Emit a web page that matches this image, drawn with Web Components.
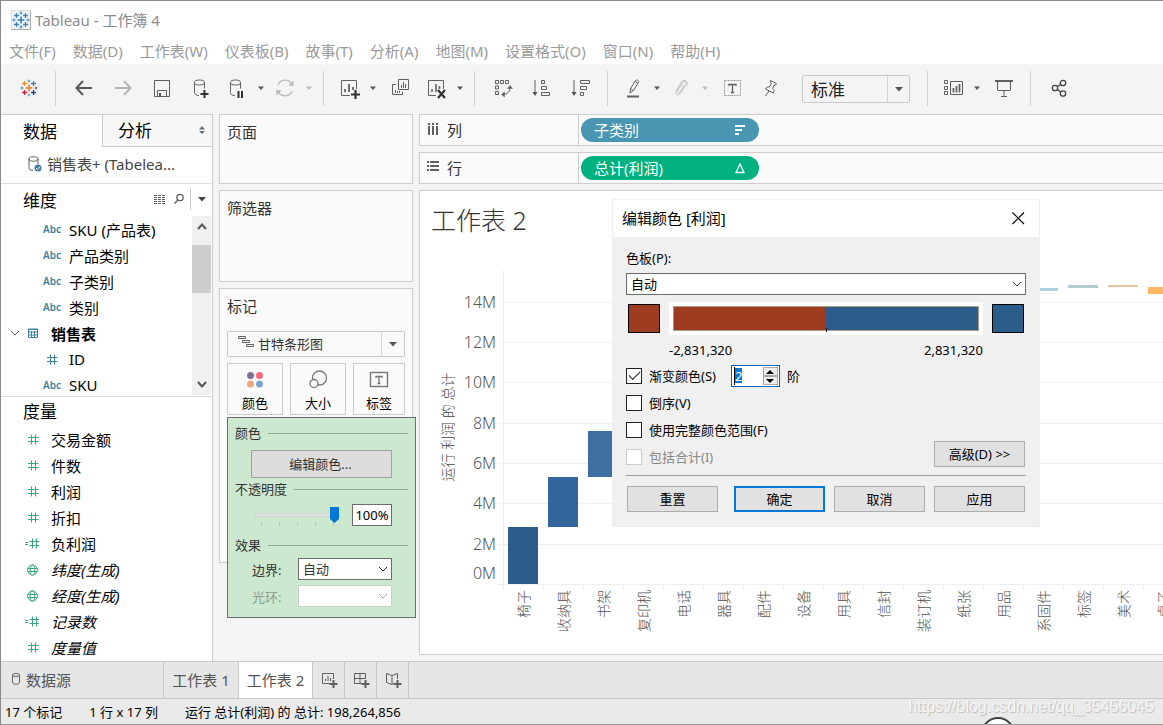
<!DOCTYPE html>
<html lang="zh-CN">
<head>
<meta charset="utf-8">
<title>Tableau - 工作簿 4</title>
<style>
html, body { margin: 0; height: 100%; }
body { font-family: "Noto Sans", "Noto Sans CJK SC", sans-serif; font-size: 15px; color: #000; background: #f4f4f4; overflow: hidden; }
</style>
</head>
<body>
<wb-app></wb-app>
<script>
const BASE = `*{box-sizing:border-box} button,select,input{font:inherit;color:inherit;margin:0;border-radius:0} button{padding:0} a{color:inherit;text-decoration:none} h1,h2,ul{margin:0;padding:0;font-weight:400} li{list-style:none}`;
function define(name, html, setup) {
  customElements.define(name, class extends HTMLElement {
    connectedCallback() {
      if (this.shadowRoot) return;
      const root = this.attachShadow({ mode: 'open' });
      const t = document.createElement('template');
      t.innerHTML = typeof html === 'function' ? html(this) : html;
      root.appendChild(t.content.cloneNode(true));
      if (setup) setup.call(this, root);
    }
  });
}
const style = css => `<style>${BASE}${css}</style>`;

/* ---------- icons ---------- */
const plus = (x, y, r, c, w = 1.2) => `<path d="M${x - r} ${y}H${x + r}M${x} ${y - r}V${y + r}" stroke="${c}" stroke-width="${w}"/>`;
const star = c => plus(12,12,3.5,c[0],1.6)+plus(7.5,7.5,2.5,c[1],1.3)+plus(16.5,7.5,2.5,c[2],1.3)+plus(7.5,16.5,2.5,c[3],1.3)+plus(16.5,16.5,2.5,c[4],1.3)+plus(12,5,1.5,c[5],1)+plus(12,19,1.5,c[6],1)+plus(5,12,1.5,c[7],1)+plus(19,12,1.5,c[8],1);
const ICONS = {
  logo: [24, star(['#eb7a2c','#e8912f','#4d7f92','#c5203d','#1f457d','#7199a6','#8199b5','#5b879b','#59607b'])],
  brand: [24, star(Array(9).fill('#3a87bb'))],
  back: [24, '<path d="M4.500 12H20M11 5L4.500 12L11 19" stroke="#5a5a5a" stroke-width="2"/>'],
  forward: [24, '<path d="M4 12H19.500M13 5L19.500 12L13 19" stroke="#b4b4b4" stroke-width="2"/>'],
  save: [24, '<path d="M4.500 4.500H19.500V20.500H4.500ZM7.500 20V14.500H16.500V20"/><path d="M9 17h2v4H9z" fill="#555" stroke="none"/>'],
  dbadd: [24, '<ellipse cx="10.500" cy="6.500" rx="5" ry="2.500"/><path d="M5.500 6.500V16.500C5.500 18.500 7.500 19.500 10 19.500M15.500 6.500V12.500"/><path d="M11.500 18H19.500M15.500 14V22" stroke="#333" stroke-width="2"/>'],
  dbpause: [24, '<ellipse cx="10.500" cy="6.500" rx="5" ry="2.500"/><path d="M5.500 6.500V16.500C5.500 18.500 7.500 19.500 10 19.500M15.500 6.500V12.500"/><path d="M13.500 15V22M17 15V22" stroke="#333" stroke-width="2"/>'],
  refresh: [24, '<g stroke="#b8b8b8" stroke-width="1.300"><path d="M5 9A7.500 7.500 0 0 1 19 9M19 15A7.500 7.500 0 0 1 5 15"/><path d="M17 9H20V6ZM7 15H4V18Z" fill="#b8b8b8"/></g>'],
  sheetadd: [24, '<path d="M13 19.500H4.500V4.500H19.500V13"/><path d="M8 16V13M12 16V8M16 14V11" stroke-width="1.800"/><path d="M14 18.500H23M18.500 14V23" stroke="#333" stroke-width="2.200"/>'],
  duplicate: [24, '<path d="M10.500 3.500H20.500V13.500H10.500Z"/><path d="M8 8.500H4.500V18.500H14.500V16"/><path d="M13.500 12V9M15.500 12V6M17.500 12V8M7.500 17V14M9.500 17V15M11.500 17V15"/>'],
  clear: [24, '<path d="M12 19.500H4.500V4.500H19.500V13"/><path d="M8 16V13M12 16V8M15.500 13V10" stroke-width="1.600"/><path d="M14 14L21 22M21 14L14 22" stroke="#333" stroke-width="2.200"/>'],
  swap: [24, '<path d="M4.500 4.500h3v3h-3zM9.500 4.500h3v3h-3zM14.500 4.500h3v3h-3zM4.500 10h3v3h-3zM4.500 15.500h3v3h-3zM19 11C19 15.500 16.500 18.500 12 18.500"/><path d="M16.500 12.500L19 9.500L21.500 12.500ZM13.500 16L10.500 18.500L13.500 21Z" fill="#606060" stroke-width=".5"/>'],
  asc: [24, '<path d="M5 4V19M11.500 4.500h3v3h-3zM11.500 10.500h5v3h-5zM11.500 16.500h8v3h-8z"/><path d="M2.500 16H7.500L5 20Z" fill="#555" stroke="none"/>'],
  desc: [24, '<path d="M5 4V19M11.500 4.500h9v3h-9zM11.500 10.500h6v3h-6zM11.500 16.500h3v3h-3z"/><path d="M2.500 16H7.500L5 20Z" fill="#555" stroke="none"/>'],
  pen: [24, '<path d="M9 17L9.500 12.500L14.500 4.500C15.500 3 18.500 5 17.500 6.500L12.500 14.500L9 17M9.500 12.500L12.500 14.500M14 5.500L17 7.500"/><path d="M6 20.500H18" stroke-width="2"/>'],
  clip: [24, '<path d="M9 14L14 6.500C15.500 4 18.500 6 17 8.500L11.500 17C9.500 20.500 5 17.500 7.500 14L12.500 6C14.500 2.500 19.500 5.500 17.500 9.500M9 14C8 16 10 17.500 11.500 15.500L15 9.500" stroke="#bcbcbc"/>'],
  text: [24, '<rect x="4.500" y="4.500" width="16" height="15" stroke-dasharray="2 1" stroke="#999"/><path d="M9 10V8.500H16V10M12.500 8.500V16M11 16.500H14" stroke-width="1.300"/>'],
  pin: [24, '<path d="M11.500 4.500L17.500 7.500L16.500 9L15.500 8.700L13.500 12.500C15.500 13.500 15 15.500 14.500 17L6.500 13C7.500 11 9 10.500 10.500 11.200L12.500 7.200L11 6ZM10 15L6.500 20"/>'],
  showme: [24, '<path d="M3.500 4.500h3v3h-3zM3.500 10.500h3v3h-3zM3.500 15.500h3v3h-3zM9.500 5.500H21.500V18.500H9.500Z"/><path d="M12.500 16.500V12M15.500 16.500V10M18.500 16.500V8" stroke-width="1.700"/>'],
  present: [24, '<path d="M3 5H21" stroke-width="2"/><path d="M5.500 6V14.500H18.500V6M12 14.500V20M9 20.500H15"/>'],
  share: [24, '<g stroke="#444" stroke-width="1.300"><circle cx="8" cy="12" r="2.700"/><circle cx="16" cy="7" r="2.700"/><circle cx="16" cy="17.500" r="2.700"/><path d="M10.500 10.500L13.500 8.500M10.500 13.500L13.500 16"/></g>'],
  caret: [8, '<path d="M1 2.500H7L4 6Z" fill="currentColor" stroke="none"/>'],
  caretlg: [8, '<path d="M0 2H8L4 6.500Z" fill="currentColor" stroke="none"/>'],
  chevron: [12, '<path d="M2 4L6 8L10 4" stroke="currentColor"/>'],
  up: [16, '<path d="M4 10L8 5.500L12 10" stroke="#555" stroke-width="2"/>'],
  down: [16, '<path d="M4 6L8 10.500L12 6" stroke="#555" stroke-width="2"/>'],
  updown: [8, '<path d="M1 3.500L4 0L7 3.500ZM1 5L4 8L7 5Z" fill="#607080" stroke="none"/>'],
  hash: [16, '<path d="M6.500 3.500V13.500M10.500 3.500V13.500M3 6.500H13.500M3 10.500H13.500" stroke="currentColor" stroke-width="1.100"/>'],
  calc: [16, '<path d="M7.500 3.500V13.500M11.500 3.500V13.500M4.500 6.500H14M4.500 10.500H14M0 7.500H3M0 9.500H3" stroke="currentColor" stroke-width="1.100"/>'],
  globe: [16, '<g stroke="currentColor"><circle cx="7.500" cy="9" r="5"/><ellipse cx="7.500" cy="9" rx="2.300" ry="5"/><path d="M3 7.500H12M3 10.500H12"/></g>'],
  table: [16, '<path d="M3.500 4H12.500V12.500H3.500ZM3.500 7H12.500M3.500 10H12.500M6.500 6V12.500M9.500 6V12.500M3.500 4.500H12.500" stroke="currentColor"/>'],
  source: [20, '<ellipse cx="8.500" cy="5" rx="4.500" ry="2.200"/><path d="M4 5V14C4 15.500 5.500 16.500 8 16.500M13 5V10"/><circle cx="13" cy="14" r="3.500" fill="#3b7f9d" stroke="none"/><path d="M11 14L12.500 15.500L15 12.500" stroke="#fff"/>'],
  viewlist: [16, '<path d="M2 4.500H14M2 6.500H14M2 8.500H14M2 10.500H14M2 12.500H14" stroke-dasharray="3 1"/>'],
  search: [16, '<circle cx="9" cy="6.500" r="3.200" stroke-width="1.300"/><path d="M7 9L3.500 12.500" stroke-width="1.500"/>'],
  db: [16, '<ellipse cx="8" cy="4" rx="3.500" ry="1.500"/><path d="M4.500 4V11C4.500 14 11.500 14 11.500 11V4"/>'],
  cols: [16, '<path d="M4 2V14M8 2V14M12 2V14" stroke="#606060" stroke-width="2"/><path d="M2 4.500H14" stroke="#fafafa"/>'],
  rows: [16, '<path d="M2 3H14M2 7H14M2 11H14" stroke="#606060" stroke-width="2"/><path d="M4.500 1V13" stroke="#fafafa"/>'],
  sort: [16, '<path d="M3 4H13M3 8H10M3 12H7" stroke="#fff" stroke-width="2"/>'],
  delta: [16, '<path d="M8 4L12 12.500H4Z" stroke="#fff" stroke-width="1.300"/>'],
  gantt: [20, '<path d="M2.500 4.500h7v2h-7zM6.500 8.500h7v2h-7zM10.500 12.500h7v2h-7z"/>'],
  dots: [24, '<g stroke="none"><circle cx="7.500" cy="7.500" r="3.500" fill="#82709a"/><circle cx="16.500" cy="7.500" r="3.500" fill="#f96a7d"/><circle cx="7.500" cy="16" r="3.500" fill="#f2a67c"/><circle cx="16.500" cy="16" r="3.500" fill="#80a2cf"/></g>'],
  size: [24, '<g stroke="#777" stroke-width="1.300"><circle cx="13.500" cy="10" r="7"/><circle cx="8" cy="15.500" r="4" fill="#fafafa"/></g>'],
  label: [24, '<g stroke="#777"><rect x="3.500" y="4.500" width="17" height="14" stroke-width="1.400"/><path d="M9 10V8.500H15V10M12 8.500V15M10.500 15.500H13.500" stroke-width="1.300"/></g>'],
  newsheet: [20, '<path d="M12 14.500H3.500V4.500H14.500V10M6.500 12V10M9 12V7M11.500 12V9"/><path d="M10.500 15H18.500M14.500 11V19" stroke-width="2"/>'],
  newdash: [20, '<path d="M12 14.500H3.500V4.500H14.500V10M9 4.500V14.500M3.500 9.500H14.500"/><path d="M10.500 15H18.500M14.500 11V19" stroke-width="2"/>'],
  newstory: [20, '<path d="M11 14L9 15.500L3.500 13.500V4.500L9 6.500L14.500 4.500V10M9 6.500V15"/><path d="M10.500 15H18.500M14.500 11V19" stroke-width="2"/>'],
  close: [16, '<path d="M2.500 2.500L14 14M14 2.500L2.500 14" stroke="#000" stroke-width="1.200"/>'],
  spinup: [8, '<path d="M0 6L4 2L8 6Z" fill="#000" stroke="none"/>'],
  spindown: [8, '<path d="M0 2L4 6L8 2Z" fill="#000" stroke="none"/>']
};
define('wb-icon', el => {
  const [s, body] = ICONS[el.getAttribute('name')];
  return style(`:host{display:inline-block;flex:none;width:${s}px;height:${s}px} svg{display:block}`) +
    `<svg width="${s}" height="${s}" viewBox="0 0 ${s} ${s}" fill="none" stroke="#606060" aria-hidden="true">${body}</svg>`;
});
const icon = n => `<wb-icon name="${n}"></wb-icon>`;

/* ---------- title and menu ---------- */
define('wb-titlebar', style(`
:host{display:flex;align-items:center;gap:4px;height:37px;padding:0 10px;background:#fff;color:#8a8a8a}
.b{width:20px;height:20px;overflow:hidden;background:#f2f2f2;border:1px solid #ddd;border-right-color:#aaa;border-bottom-color:#aaa}
.b wb-icon{display:block;margin:-3px}h1{font-size:15px}`) + `<span class="b">${icon('brand')}</span><h1>Tableau - 工作簿 4</h1>`);
define('wb-menubar', style(`
:host{display:block;background:#fff;color:#9a9a9a} nav{display:flex;gap:17px;height:26px;line-height:26px;padding:0 8px;white-space:nowrap}`) +
  `<nav>${['文件(F)','数据(D)','工作表(W)','仪表板(B)','故事(T)','分析(A)','地图(M)','设置格式(O)','窗口(N)','帮助(H)'].map(t => `<a href="#">${t}</a>`).join('')}</nav>`);

/* ---------- toolbar ---------- */
const tb = (n, l) => `<button aria-label="${l}">${icon(n)}</button>`;
const sp = (n, l, c = '') => `<button class="split ${c}" aria-label="${l}">${icon(n)}${icon('caret')}</button>`;
define('wb-toolbar', style(`
:host{display:flex;align-items:center;height:50px;padding:0 0 2px 8px;background:#f4f4f4;overflow:hidden}
button{width:39px;height:32px;flex:none;border:0;background:none;display:flex;align-items:center;justify-content:center;color:#555}
.split{width:48px;justify-content:flex-start;padding-left:5px;gap:8px}.off{color:#bbb}
i{flex:none;width:1px;height:35px;margin:0 8px 0 7px;background:#d0d0d0}
.sel{position:relative;flex:none;width:108px;height:28px;margin:2px 10px 0 12px;border:1px solid #c8c8c8;border-radius:2px}
select{appearance:none;width:100%;height:100%;border:0;background:none;padding:0 8px;font-size:17px;color:#222}
.sel span{position:absolute;right:0;top:0;width:22px;height:26px;border-left:1px solid #d4d4d4;display:grid;place-items:center;color:#555;pointer-events:none}`) +
  tb('logo','开始页面')+'<i></i>'+tb('back','撤消')+tb('forward','重做')+tb('save','保存')+tb('dbadd','新建数据源')+sp('dbpause','暂停更新')+sp('refresh','运行更新','off')+'<i></i>'+
  sp('sheetadd','新建工作表')+tb('duplicate','复制')+sp('clear','清除')+'<i></i>'+tb('swap','交换')+tb('asc','升序')+tb('desc','降序')+'<i></i>'+
  sp('pen','突出显示')+sp('clip','组','off')+tb('text','标签')+tb('pin','固定轴')+
  `<div class="sel"><select aria-label="适合"><option>标准</option></select><span>${icon('caretlg')}</span></div><i></i>`+
  sp('showme','卡')+tb('present','演示')+'<i></i>'+tb('share','共享'));

/* ---------- data pane ---------- */
define('wb-field', el => style(`
:host{display:flex;align-items:center;height:26px;padding-left:${el.hasAttribute('nested') ? 42 : 24}px;white-space:nowrap}
:host([measure]){--c:#3da584} .i{color:var(--c,#3b7f9d);width:26px;display:flex;flex:none;font-size:10px;font-weight:600}
:host([nested]) wb-icon{margin-left:1px}
:host([group]){font-weight:700;padding-left:8px} :host([group]) .x{color:#555;width:16px;display:flex} :host([italic]){font-style:italic}`) +
  (el.hasAttribute('group') ? `<span class="x">${icon('chevron')}</span>` : '') +
  `<span class="i">${el.getAttribute('type') === 'abc' ? 'Abc' : icon(el.getAttribute('type'))}</span><slot></slot>`);
define('wb-datapane', style(`
:host{display:flex;flex-direction:column;width:212px;flex:none;background:#fff;border:solid #ccc;border-width:1px 1px 0 0}
.tabs{display:flex;height:32px}.tabs button{border:0;background:#fff;width:101px;font-size:17px;text-align:left;padding:0 0 2px 22px}
.tabs .b{flex:1;display:flex;align-items:center;justify-content:space-between;padding:0 6px 2px 15px;background:#f8f8f8;border:solid #ccc;border-width:0 0 1px 1px}
.src{display:flex;align-items:center;height:37px;padding:0 0 3px 24px;gap:2px;color:#444;border-bottom:1px solid #ddd;white-space:nowrap}
.hd{display:flex;align-items:center;height:32px;padding:0 0 2px 22px}h2{font-size:17px}
.hd .t{margin-left:auto;display:flex;align-items:center;height:22px;gap:3px}.t button{border:0;background:none;display:flex;color:#444}.t .m{width:22px;height:22px;border-left:1px solid #ccc;align-items:center;justify-content:center}
.dim{display:flex;height:181px;border-bottom:1px solid #ddd;overflow:hidden}.dim ul{flex:1;overflow:hidden}
.sb{width:20px;height:179px;padding-right:1px;background:#f0f0f0;background-clip:content-box;display:grid;grid-template-rows:29px 48px 1fr;justify-items:center}.sb wb-icon{margin-top:3px}.sb b{width:19px;background:#cdcdcd}.sb .e{align-self:end;margin:0 0 3px}
.ms{height:29px}`) + `
<div class="tabs"><button>数据</button><button class="b">分析${icon('updown')}</button></div>
<div class="src">${icon('source')}<span>销售表+ (Tabelea...</span></div>
<div class="hd"><h2>维度</h2><div class="t"><button aria-label="查看数据">${icon('viewlist')}</button><button aria-label="查找">${icon('search')}</button><button class="m" aria-label="菜单">${icon('caretlg')}</button></div></div>
<div class="dim"><ul>
${['SKU (产品表)','产品类别','子类别','类别'].map(t => `<li><wb-field type="abc" nested>${t}</wb-field></li>`).join('')}
<li><wb-field type="table" group>销售表</wb-field></li><li><wb-field type="hash" nested>ID</wb-field></li><li><wb-field type="abc" nested>SKU</wb-field></li></ul>
<div class="sb">${icon('up')}<b></b><wb-icon class="e" name="down"></wb-icon></div></div>
<div class="hd ms"><h2>度量</h2></div><ul>
${[['hash','交易金额'],['hash','件数'],['hash','利润'],['hash','折扣'],['calc','负利润'],['globe','纬度(生成)',1],['globe','经度(生成)',1],['calc','记录数',1],['hash','度量值',1]].map(([i,t,s]) => `<li><wb-field measure type="${i}" ${s ? 'italic' : ''}>${t}</wb-field></li>`).join('')}</ul>`);

/* ---------- cards ---------- */
define('wb-card', el => style(`
:host{display:block;position:relative;border:1px solid #ccc;background:#fafafa;padding:5px 7px;color:#333} h2{font-size:15px;line-height:24px}`) +
  `<h2>${el.getAttribute('label')}</h2><slot></slot>`);
define('wb-colorpopup', style(`
:host{display:block;width:189px;padding:6px 7px 10px;background:#cce8cf;border:1px solid #6c6c6c;font-size:13px;color:#333}
h2{display:flex;align-items:center;gap:7px;font-size:13px;line-height:18px;height:18px}h2::after{content:"";flex:1;height:1px;background:#93a795}
.e{display:block;width:141px;height:28px;margin:8px 0 2px 16px;padding:0 2px 2px 0;border:1px solid #a0a0a0;background:#ddd}
.s{display:flex;align-items:center;justify-content:space-between;margin:6px 16px 10px 20px}
.r{position:relative;width:85px;height:22px;background:repeating-linear-gradient(90deg,#b5c6b6 0 1px,transparent 1px 18px) 6px 18px/74px 4px no-repeat}
input[type=range]{appearance:none;display:block;width:85px;height:22px;background:none}
input::-webkit-slider-runnable-track{height:4px;background:#dfe6df;border:1px solid #d2d2d2}
input::-webkit-slider-thumb{appearance:none;width:9px;height:16px;margin-top:-7px;background:#0078d7;clip-path:polygon(0 0,100% 0,100% 75%,50% 100%,0 75%)}
.p{width:40px;height:22px;border:1px solid #6c6c6c;background:#fff;padding:0;text-align:center;color:#000}
.f{display:flex;align-items:center;margin:4px 16px 5px 17px;height:22px}.f label{width:46px}.f+.f{margin-bottom:0}
.w{position:relative;flex:1;height:22px}select{appearance:none;display:block;width:100%;height:22px;border:1px solid #6c6c6c;background:#fff;padding:0 4px;opacity:1}.w wb-icon{position:absolute;right:3px;top:5px;pointer-events:none}
.off{color:#8d9c8e}.off select{border-color:#ccc}.off wb-icon{color:#aaa}`) + `
<h2>颜色</h2><button class="e">编辑颜色...</button><h2>不透明度</h2>
<div class="s"><div class="r"><input type="range" value="100" aria-label="不透明度"></div><input class="p" value="100%" aria-label="不透明度值"></div>
<h2>效果</h2><div class="f"><label for="b">边界:</label><div class="w"><select id="b"><option>自动</option></select>${icon('chevron')}</div></div>
<div class="f off"><label for="h">光环:</label><div class="w"><select id="h" disabled><option></option></select>${icon('chevron')}</div></div>`);
define('wb-cards', style(`
:host{display:flex;flex-direction:column;gap:6px;width:194px;flex:none;margin:0 6px}
.a{height:70px}.b{height:92px}.c{height:275px}
.sel{position:relative;display:flex;align-items:center;height:26px;margin:13px 0 6px;border:1px solid #c8c8c8;border-radius:2px}
.sel wb-icon{pointer-events:none}.g{position:absolute;left:8px;top:0}
select{appearance:none;width:100%;height:100%;border:0;background:none;padding:0 30px;font-size:13px;color:#333}
.sel span{position:absolute;right:0;top:0;width:23px;height:24px;border-left:1px solid #d4d4d4;display:grid;place-items:center;color:#555}
.m{display:grid;grid-template-columns:56px 56px 1fr;gap:7px}.m button{height:52px;border:1px solid #ccc;background:#fafafa;font-size:13px;line-height:18px;display:flex;flex-direction:column;align-items:center;justify-content:space-between;padding:4px 0 2px;color:#000}
wb-colorpopup{position:absolute;z-index:3;left:7px;top:128px}`) + `
<wb-card class="a" label="页面"></wb-card><wb-card class="b" label="筛选器"></wb-card>
<wb-card class="c" label="标记"><div class="sel"><select aria-label="标记类型"><option>甘特条形图</option></select><wb-icon class="g" name="gantt"></wb-icon><span>${icon('caretlg')}</span></div>
<div class="m"><button>${icon('dots')}颜色</button><button>${icon('size')}大小</button><button>${icon('label')}标签</button></div><wb-colorpopup></wb-colorpopup></wb-card>`);

/* ---------- shelves ---------- */
define('wb-shelf', el => style(`
:host{display:flex;height:32px;border:1px solid #ccc;border-right:0;background:#fafafa;align-items:center;color:#333}
.l{width:159px;height:30px;display:flex;align-items:center;gap:6px;padding:0 0 2px 5px;border-right:1px solid #ccc}
button{width:178px;height:24px;margin-left:2px;border:0;border-radius:12px;background:${el.getAttribute('fill')};color:#fff;display:flex;align-items:center;justify-content:space-between;padding:0 11px 1px 13px}`) +
  `<span class="l">${icon(el.getAttribute('icon'))}${el.getAttribute('label')}</span><button><slot></slot>${icon(el.getAttribute('mark'))}</button>`);

/* ---------- waterfall chart ---------- */
define('wb-chart', () => {
  const names = ['椅子','收纳具','书架','复印机','电话','器具','配件','设备','用具','信封','装订机','纸张','用品','系固件','标签','美术','桌子'];
  const grid = [[61,'14M'],[101,'12M'],[141,'10M'],[182,'8M'],[222,'6M'],[262,'4M'],[303,'2M']];
  const bars = [[0,286,57,'#2b5c8a'],[1,236,50,'#33669a'],[2,190,46,'#3f70a3'],[13,47,3,'#aed0dc'],[14,44,3,'#b5cbd4'],[15,44,2,'#e6c8a0'],[16,46,7,'#fbb764']];
  let s = grid.map(([y,t]) => `<rect x="79" y="${y}" width="100%" height="1" fill="#f0f0f0"/><text x="76" y="${y + 6}" text-anchor="end" font-size="16">${t}</text>`).join('');
  s += '<text x="76" y="338" text-anchor="end" font-size="16">0M</text><rect x="83" y="29" width="1" height="318" fill="#eee"/><rect x="79" y="343" width="100%" height="1" fill="#eee"/>';
  s += bars.map(([i,y,h,c]) => `<rect x="${88 + 40 * i}" y="${y}" width="30" height="${h}" fill="${c}"/>`).join('');
  s += names.map((t,i) => `<rect x="${83 + 40 * i}" y="343" width="1" height="5" fill="#eee"/><text transform="translate(${109 + 40 * i} 349) rotate(-90)" text-anchor="end" font-size="14">${t}</text>`).join('');
  s += '<text transform="translate(33 186) rotate(-90)" text-anchor="middle" font-size="14" fill="#444">运行 利润 的 总计</text>';
  return style(`:host{display:block;flex:1;min-height:410px}svg{display:block;width:100%;height:100%;font-weight:300}`) + `<svg fill="#555">${s}</svg>`;
});

/* ---------- dialog ---------- */
define('wb-colordialog', style(`
:host{display:block;width:428px;background:#f0f0f0;border:1px solid #eee;font-size:13px;color:#000}
header{display:flex;align-items:center;justify-content:space-between;height:37px;background:#fff;padding:0 13px 2px 9px}h2{font-size:15px}header button{border:0;background:none;display:flex}
.body{padding:12px 13px 14px}.l{display:block;line-height:18px}
.w{position:relative;margin:6px 0 7px}.w select{appearance:none;display:block;width:100%;height:22px;border:1px solid #6c6c6c;background:#fff;padding:0 4px 1px}.w wb-icon{position:absolute;right:3px;top:5px;color:#444;pointer-events:none}
.ramp{display:flex;align-items:center;justify-content:space-between;padding:0 2px;height:33px}.ramp button{width:32px;height:29px;border:1px solid #000;background:#9e3c22}.ramp .n{background:#2b5c8a}
.bar{position:relative;width:314px;height:33px;padding:4px;background:#fff}.bar i{display:block;height:25px;border:1px solid #a59d88;background:linear-gradient(90deg,#9e3c22 50%,#2b5c8a 50%)}.bar b{position:absolute;left:157px;top:26px;width:1px;height:4px;background:#000}
.v{display:flex;justify-content:space-between;margin:6px 43px 3px;line-height:18px}
.o{display:flex;justify-content:space-between;align-items:flex-end;padding-right:1px}.c{display:flex;align-items:center;height:27px}.c label{margin-left:7px}.o>button{margin-bottom:3px}
input[type=checkbox]{appearance:none;width:16px;height:16px;border:1px solid #222;background:#fff;display:grid;place-items:center}
input[type=checkbox]:checked::before{content:"";width:10px;height:5px;border:solid #222;border-width:0 0 1px 1px;rotate:-45deg;margin-bottom:4px}input:disabled{border-color:#ccc!important}.off{color:#888}
.sp{display:flex;width:49px;height:22px;margin:0 7px 0 15px;border:1px solid #0067b8;background:#fff;padding:1px 1px 1px 2px}
.sp input{flex:1;min-width:0;border:0;outline:0;padding:0;color:#fff;background:linear-gradient(#0078d7,#0078d7) 0 1px/7px 15px no-repeat;border-left:1px solid #000}
.sp div{display:grid;grid-template-rows:9px 9px;width:15px}.sp button{border:1px solid #aaa;background:#eee;display:grid;place-items:center;overflow:hidden}.sp+label{margin:0}
.k{width:91px;height:26px;padding-bottom:2px;border:1px solid #adadad;background:#e1e1e1}.k.d{border:2px solid #0078d7}
.f{display:flex;gap:9px;margin-top:5px;padding:10px 1px 0;border-top:1px solid #a0a0a0}.f .k:first-child{margin-right:auto}`) + `
<header><h2>编辑颜色 [利润]</h2><button aria-label="关闭">${icon('close')}</button></header>
<div class="body"><label class="l" for="p">色板(P):</label><div class="w"><select id="p"><option>自动</option></select>${icon('chevron')}</div>
<div class="ramp"><button aria-label="起始颜色"></button><div class="bar"><i></i><b></b></div><button class="n" aria-label="结束颜色"></button></div>
<div class="v"><span>-2,831,320</span><span>2,831,320</span></div>
<div class="o"><div><div class="c"><input type="checkbox" id="s" checked><label for="s">渐变颜色(S)</label><span class="sp"><input value="2" id="n" aria-label="阶数"><div><button aria-label="增加">${icon('spinup')}</button><button aria-label="减少">${icon('spindown')}</button></div></span><label for="n">阶</label></div>
<div class="c"><input type="checkbox" id="r"><label for="r">倒序(V)</label></div><div class="c"><input type="checkbox" id="f"><label for="f">使用完整颜色范围(F)</label></div><div class="c off"><input type="checkbox" id="t" disabled><label for="t">包括合计(I)</label></div></div>
<button class="k">高级(D) &gt;&gt;</button></div>
<div class="f"><button class="k">重置</button><button class="k d">确定</button><button class="k">取消</button><button class="k">应用</button></div></div>`);

/* ---------- worksheet ---------- */
define('wb-sheet', style(`
:host{display:flex;flex-direction:column;gap:6px;flex:1;min-width:0}
.v{position:relative;flex:1;display:flex;flex-direction:column;min-height:0;background:#fff;border:1px solid #ccc;border-right:0;margin-bottom:6px}
h1{font-size:25px;font-weight:300;height:50px;padding:4px 0 0 11px;color:#333;line-height:50px}
wb-colordialog{position:absolute;z-index:4;left:192px;top:8px}`) + `
<wb-shelf icon="cols" label="列" fill="#4996b2" mark="sort">子类别</wb-shelf><wb-shelf icon="rows" label="行" fill="#00b180" mark="delta">总计(利润)</wb-shelf>
<div class="v"><h1>工作表 2</h1><wb-chart></wb-chart><wb-colordialog></wb-colordialog></div>`);

/* ---------- bottom bars ---------- */
define('wb-tabs', style(`
:host{display:flex;height:38px;background:#e6e6e6;border:solid #c8c8c8;border-width:1px 0;color:#555}
button{border:0;border-right:1px solid #c8c8c8;background:none;display:flex;align-items:center;justify-content:center;width:75px;padding-bottom:2px;white-space:nowrap}.d{width:163px;justify-content:flex-start;padding-left:7px;gap:2px}.n{width:32px}.a{width:74px;background:#fff}`) +
  `<button class="d">${icon('db')}数据源</button><button>工作表 1</button><button class="a">工作表 2</button><button class="n" aria-label="新建工作表">${icon('newsheet')}</button><button class="n" aria-label="新建仪表板">${icon('newdash')}</button><button class="n" aria-label="新建故事">${icon('newstory')}</button>`);
define('wb-status', style(`
:host{display:flex;position:relative;align-items:center;gap:27px;height:26px;padding-left:4px;background:#eaeaea;border-bottom:1px solid #999;font-size:13px;overflow:hidden;white-space:nowrap}
.m{position:absolute;right:9px;top:-1px;font:16px/18px "Liberation Sans",sans-serif;color:#f6f6f6;text-shadow:1px 1px 1px #bbb}
i{position:absolute;right:148px;top:18px;width:34px;height:34px;border:2px solid #444;border-radius:50%;background:#fff}`) +
  `<span>17 个标记</span><span>1 行 x 17 列</span><span>运行 总计(利润) 的 总计: 198,264,856</span><i></i><span class="m">https://blog.csdn.net/qq_35456045</span>`);

define('wb-app', style(`
:host{display:flex;flex-direction:column;height:100vh;min-height:700px;border:solid #8a8a86;border-width:1px 0 0 1px;box-sizing:border-box}
.w{display:flex;flex:1;min-height:0}wb-datapane{min-height:0;overflow:hidden}`) +
  `<wb-titlebar></wb-titlebar><wb-menubar></wb-menubar><wb-toolbar></wb-toolbar><div class="w"><wb-datapane></wb-datapane><wb-cards></wb-cards><wb-sheet></wb-sheet></div><wb-tabs></wb-tabs><wb-status></wb-status>`);
</script>
</body>
</html>
